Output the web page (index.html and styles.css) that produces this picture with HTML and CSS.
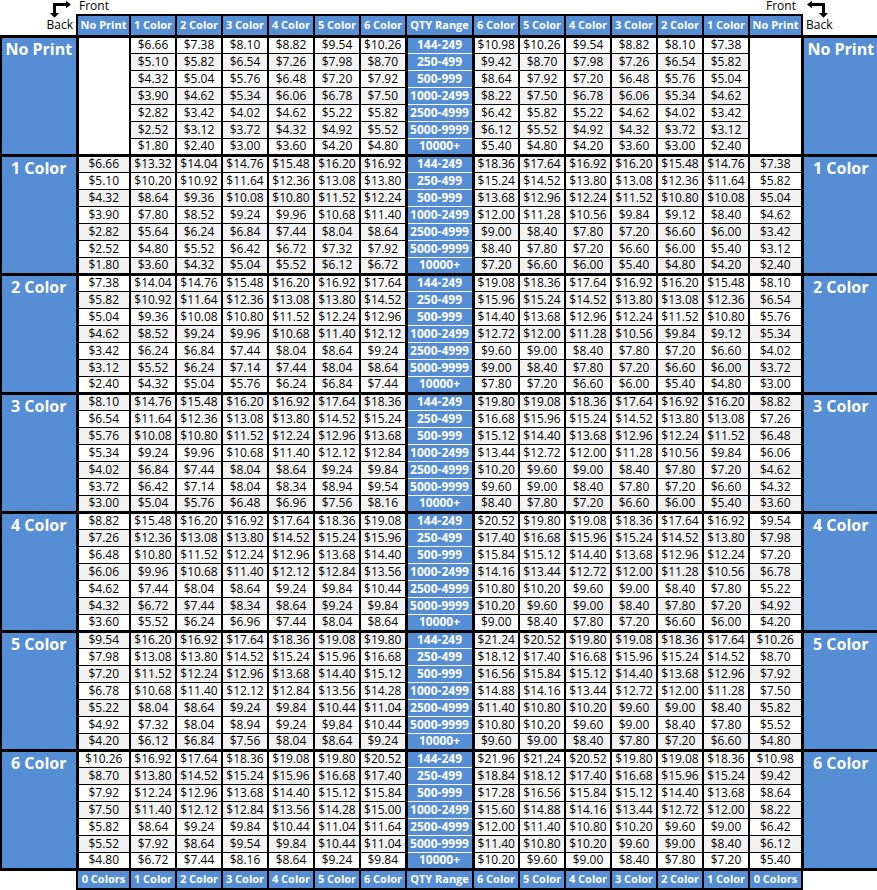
FILE: index.html
```html
<!DOCTYPE html>
<html lang="en">
<head>
<meta charset="utf-8">
<title>Price Matrix</title>
<link rel="stylesheet" href="styles.css">
</head>
<body>
<div class="top">
  <span class="front front-l">Front</span>
  <span class="front front-r">Front</span>
  <svg class="arrow arrow-l" width="26" height="18" viewBox="0 0 26 18" aria-hidden="true">
    <rect x="5" y="3" width="3" height="10.5" fill="#000"/>
    <rect x="5" y="3" width="14" height="3" fill="#000"/>
    <polygon points="18,0.8 23,4.5 18,8.2" fill="#000"/>
    <polygon points="2,13 11,13 6.5,17.8" fill="#000"/>
  </svg>
  <svg class="arrow arrow-r" width="26" height="18" viewBox="0 0 26 18" aria-hidden="true">
    <rect x="5" y="3" width="3" height="10.5" fill="#000"/>
    <rect x="5" y="3" width="14" height="3" fill="#000"/>
    <polygon points="18,0.8 23,4.5 18,8.2" fill="#000"/>
    <polygon points="2,13 11,13 6.5,17.8" fill="#000"/>
  </svg>
</div>
<table class="grid">
  <colgroup>
    <col class="w-lab"><col class="w-np">
    <col class="w-c"><col class="w-c"><col class="w-c"><col class="w-c"><col class="w-c"><col class="w-c">
    <col class="w-q">
    <col class="w-c"><col class="w-c"><col class="w-c"><col class="w-c"><col class="w-c"><col class="w-c">
    <col class="w-np"><col class="w-lab">
  </colgroup>
  <thead>
    <tr class="head">
      <th class="corner corner-l">Back</th>
      <th class="h">No Print</th>
      <th class="h">1 Color</th><th class="h">2 Color</th><th class="h">3 Color</th>
      <th class="h">4 Color</th><th class="h">5 Color</th><th class="h">6 Color</th>
      <th class="h">QTY Range</th>
      <th class="h">6 Color</th><th class="h">5 Color</th><th class="h">4 Color</th>
      <th class="h">3 Color</th><th class="h">2 Color</th><th class="h">1 Color</th>
      <th class="h">No Print</th>
      <th class="corner corner-r">Back</th>
    </tr>
  </thead>
  <tbody id="rows"></tbody>
  <tfoot>
    <tr class="foot">
      <td class="corner"></td>
      <td class="h">0 Colors</td>
      <td class="h">1 Color</td><td class="h">2 Color</td><td class="h">3 Color</td>
      <td class="h">4 Color</td><td class="h">5 Color</td><td class="h">6 Color</td>
      <td class="h">QTY Range</td>
      <td class="h">6 Color</td><td class="h">5 Color</td><td class="h">4 Color</td>
      <td class="h">3 Color</td><td class="h">2 Color</td><td class="h">1 Color</td>
      <td class="h">0 Colors</td>
      <td class="corner"></td>
    </tr>
  </tfoot>
</table>
<script src="script.js"></script>
</body>
</html>
```

FILE: styles.css
```css
:root {
  --blue: #558ed5;
  --alt: #f2f2f2;
}
html, body {
  margin: 0;
  padding: 0;
  background: #fff;
  overflow: hidden;
}
body {
  width: 877px;
  font-family: "Open Sans", "Noto Sans", sans-serif;
  color: #000;
}
.top {
  position: relative;
  height: 14px;
}
.front {
  position: absolute;
  top: 0;
  font-size: 12px;
  line-height: 12px;
}
.front-l { left: 79px; }
.front-r { left: 766px; }
.arrow {
  position: absolute;
  top: 0;
  z-index: 2;
}
.arrow-l { left: 48px; }
.arrow-r { left: 804px; transform: scaleX(-1); }

.grid {
  border-collapse: collapse;
  table-layout: fixed;
  width: 877px;
}
.w-lab { width: 76px; }
.w-np { width: 53px; }
.w-c { width: 46px; }
.w-q { width: 67px; }

.grid th, .grid td {
  padding: 0;
  text-align: center;
  white-space: nowrap;
  overflow: hidden;
}
.head { height: 21px; }
.foot { height: 20px; }
.data { height: 17px; }

.h {
  background: var(--blue);
  color: #fff;
  font-weight: 700;
  font-size: 11px;
  line-height: 14px;
  border: 2px solid #000;
}
.grid .corner {
  border: none;
  background: #fff;
}
.grid .corner-l, .grid .corner-r {
  font-size: 12px;
  font-weight: 400;
  vertical-align: bottom;
  line-height: 14px;
  padding-bottom: 3px;
}
.grid .corner-l { text-align: right; padding-right: 3px; }
.grid .corner-r { text-align: left; padding-left: 3px; }

.price {
  background: #fff;
  font-size: 12px;
  line-height: 14px;
  border: 1px solid #000;
  border-left-width: 2px;
  border-right-width: 2px;
}
.alt .price { background: var(--alt); }
.first td { border-top: 3px solid #000; }
.last td { border-bottom: 3px solid #000; }

.qty {
  background: var(--blue);
  color: #fff;
  font-weight: 700;
  font-size: 12px;
  line-height: 14px;
  border: 1px solid #fff;
  border-left: 3px solid #000;
  border-right: 3px solid #000;
}
.grid .label {
  background: var(--blue);
  color: #fff;
  font-weight: 700;
  font-size: 16px;
  line-height: 20px;
  vertical-align: top;
  padding-top: 1px;
  border: 3px solid #000;
  border-left-width: 2px;
}
.grid .label-r {
  border-left-width: 3px;
  border-right: none;
}
.blank {
  background: #fff;
  border: 2px solid #000;
  border-top-width: 3px;
  border-bottom-width: 3px;
}
```

FILE: script.js
```js
(function () {
  var labels = ["No Print", "1 Color", "2 Color", "3 Color", "4 Color", "5 Color", "6 Color"];
  var qty = ["144-249", "250-499", "500-999", "1000-2499", "2500-4999", "5000-9999", "10000+"];
  var data = [
    [
      "- 6.66 7.38 8.10 8.82 9.54 10.26 | 10.98 10.26 9.54 8.82 8.10 7.38 -",
      "- 5.10 5.82 6.54 7.26 7.98 8.70 | 9.42 8.70 7.98 7.26 6.54 5.82 -",
      "- 4.32 5.04 5.76 6.48 7.20 7.92 | 8.64 7.92 7.20 6.48 5.76 5.04 -",
      "- 3.90 4.62 5.34 6.06 6.78 7.50 | 8.22 7.50 6.78 6.06 5.34 4.62 -",
      "- 2.82 3.42 4.02 4.62 5.22 5.82 | 6.42 5.82 5.22 4.62 4.02 3.42 -",
      "- 2.52 3.12 3.72 4.32 4.92 5.52 | 6.12 5.52 4.92 4.32 3.72 3.12 -",
      "- 1.80 2.40 3.00 3.60 4.20 4.80 | 5.40 4.80 4.20 3.60 3.00 2.40 -"
    ],
    [
      "6.66 13.32 14.04 14.76 15.48 16.20 16.92 | 18.36 17.64 16.92 16.20 15.48 14.76 7.38",
      "5.10 10.20 10.92 11.64 12.36 13.08 13.80 | 15.24 14.52 13.80 13.08 12.36 11.64 5.82",
      "4.32 8.64 9.36 10.08 10.80 11.52 12.24 | 13.68 12.96 12.24 11.52 10.80 10.08 5.04",
      "3.90 7.80 8.52 9.24 9.96 10.68 11.40 | 12.00 11.28 10.56 9.84 9.12 8.40 4.62",
      "2.82 5.64 6.24 6.84 7.44 8.04 8.64 | 9.00 8.40 7.80 7.20 6.60 6.00 3.42",
      "2.52 4.80 5.52 6.42 6.72 7.32 7.92 | 8.40 7.80 7.20 6.60 6.00 5.40 3.12",
      "1.80 3.60 4.32 5.04 5.52 6.12 6.72 | 7.20 6.60 6.00 5.40 4.80 4.20 2.40"
    ],
    [
      "7.38 14.04 14.76 15.48 16.20 16.92 17.64 | 19.08 18.36 17.64 16.92 16.20 15.48 8.10",
      "5.82 10.92 11.64 12.36 13.08 13.80 14.52 | 15.96 15.24 14.52 13.80 13.08 12.36 6.54",
      "5.04 9.36 10.08 10.80 11.52 12.24 12.96 | 14.40 13.68 12.96 12.24 11.52 10.80 5.76",
      "4.62 8.52 9.24 9.96 10.68 11.40 12.12 | 12.72 12.00 11.28 10.56 9.84 9.12 5.34",
      "3.42 6.24 6.84 7.44 8.04 8.64 9.24 | 9.60 9.00 8.40 7.80 7.20 6.60 4.02",
      "3.12 5.52 6.24 7.14 7.44 8.04 8.64 | 9.00 8.40 7.80 7.20 6.60 6.00 3.72",
      "2.40 4.32 5.04 5.76 6.24 6.84 7.44 | 7.80 7.20 6.60 6.00 5.40 4.80 3.00"
    ],
    [
      "8.10 14.76 15.48 16.20 16.92 17.64 18.36 | 19.80 19.08 18.36 17.64 16.92 16.20 8.82",
      "6.54 11.64 12.36 13.08 13.80 14.52 15.24 | 16.68 15.96 15.24 14.52 13.80 13.08 7.26",
      "5.76 10.08 10.80 11.52 12.24 12.96 13.68 | 15.12 14.40 13.68 12.96 12.24 11.52 6.48",
      "5.34 9.24 9.96 10.68 11.40 12.12 12.84 | 13.44 12.72 12.00 11.28 10.56 9.84 6.06",
      "4.02 6.84 7.44 8.04 8.64 9.24 9.84 | 10.20 9.60 9.00 8.40 7.80 7.20 4.62",
      "3.72 6.42 7.14 8.04 8.34 8.94 9.54 | 9.60 9.00 8.40 7.80 7.20 6.60 4.32",
      "3.00 5.04 5.76 6.48 6.96 7.56 8.16 | 8.40 7.80 7.20 6.60 6.00 5.40 3.60"
    ],
    [
      "8.82 15.48 16.20 16.92 17.64 18.36 19.08 | 20.52 19.80 19.08 18.36 17.64 16.92 9.54",
      "7.26 12.36 13.08 13.80 14.52 15.24 15.96 | 17.40 16.68 15.96 15.24 14.52 13.80 7.98",
      "6.48 10.80 11.52 12.24 12.96 13.68 14.40 | 15.84 15.12 14.40 13.68 12.96 12.24 7.20",
      "6.06 9.96 10.68 11.40 12.12 12.84 13.56 | 14.16 13.44 12.72 12.00 11.28 10.56 6.78",
      "4.62 7.44 8.04 8.64 9.24 9.84 10.44 | 10.80 10.20 9.60 9.00 8.40 7.80 5.22",
      "4.32 6.72 7.44 8.34 8.64 9.24 9.84 | 10.20 9.60 9.00 8.40 7.80 7.20 4.92",
      "3.60 5.52 6.24 6.96 7.44 8.04 8.64 | 9.00 8.40 7.80 7.20 6.60 6.00 4.20"
    ],
    [
      "9.54 16.20 16.92 17.64 18.36 19.08 19.80 | 21.24 20.52 19.80 19.08 18.36 17.64 10.26",
      "7.98 13.08 13.80 14.52 15.24 15.96 16.68 | 18.12 17.40 16.68 15.96 15.24 14.52 8.70",
      "7.20 11.52 12.24 12.96 13.68 14.40 15.12 | 16.56 15.84 15.12 14.40 13.68 12.96 7.92",
      "6.78 10.68 11.40 12.12 12.84 13.56 14.28 | 14.88 14.16 13.44 12.72 12.00 11.28 7.50",
      "5.22 8.04 8.64 9.24 9.84 10.44 11.04 | 11.40 10.80 10.20 9.60 9.00 8.40 5.82",
      "4.92 7.32 8.04 8.94 9.24 9.84 10.44 | 10.80 10.20 9.60 9.00 8.40 7.80 5.52",
      "4.20 6.12 6.84 7.56 8.04 8.64 9.24 | 9.60 9.00 8.40 7.80 7.20 6.60 4.80"
    ],
    [
      "10.26 16.92 17.64 18.36 19.08 19.80 20.52 | 21.96 21.24 20.52 19.80 19.08 18.36 10.98",
      "8.70 13.80 14.52 15.24 15.96 16.68 17.40 | 18.84 18.12 17.40 16.68 15.96 15.24 9.42",
      "7.92 12.24 12.96 13.68 14.40 15.12 15.84 | 17.28 16.56 15.84 15.12 14.40 13.68 8.64",
      "7.50 11.40 12.12 12.84 13.56 14.28 15.00 | 15.60 14.88 14.16 13.44 12.72 12.00 8.22",
      "5.82 8.64 9.24 9.84 10.44 11.04 11.64 | 12.00 11.40 10.80 10.20 9.60 9.00 6.42",
      "5.52 7.92 8.64 9.54 9.84 10.44 11.04 | 11.40 10.80 10.20 9.60 9.00 8.40 6.12",
      "4.80 6.72 7.44 8.16 8.64 9.24 9.84 | 10.20 9.60 9.00 8.40 7.80 7.20 5.40"
    ]
  ];

  var body = document.getElementById("rows");

  function cell(cls, text, rowspan) {
    var td = document.createElement("td");
    td.className = cls;
    td.textContent = text;
    if (rowspan) td.rowSpan = rowspan;
    return td;
  }

  function addPrice(tr, v, r) {
    if (v === "-") {
      if (r === 0) tr.appendChild(cell("blank", "", 7));
      return;
    }
    tr.appendChild(cell("price", "$" + v));
  }

  data.forEach(function (group, g) {
    group.forEach(function (line, r) {
      var tr = document.createElement("tr");
      var cls = ["data"];
      if ((g * 7 + r) % 2 === 1) cls.push("alt");
      if (r === 0) cls.push("first");
      if (r === 6) cls.push("last");
      tr.className = cls.join(" ");

      var halves = line.split("|");
      var left = halves[0].trim().split(/\s+/);
      var right = halves[1].trim().split(/\s+/);

      if (r === 0) tr.appendChild(cell("label", labels[g], 7));
      left.forEach(function (v) { addPrice(tr, v, r); });
      tr.appendChild(cell("qty", qty[r]));
      right.forEach(function (v) { addPrice(tr, v, r); });
      if (r === 0) tr.appendChild(cell("label label-r", labels[g], 7));

      body.appendChild(tr);
    });
  });
})();
```
